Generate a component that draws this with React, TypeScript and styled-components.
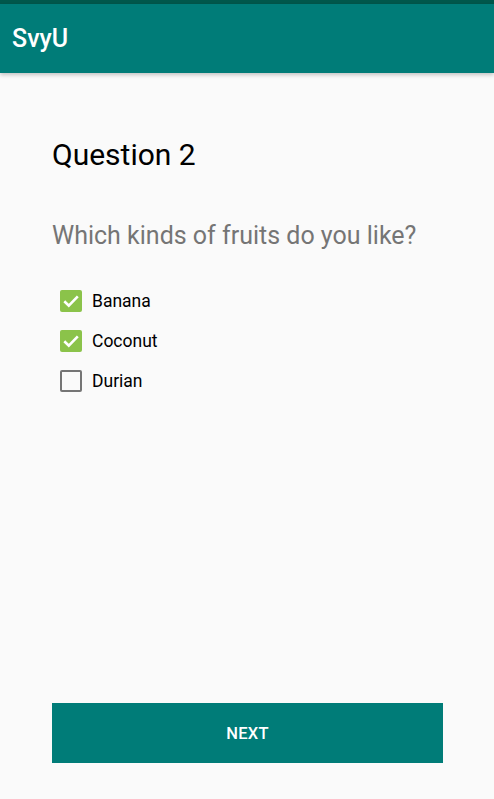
import styled, { createGlobalStyle } from "styled-components";

const GlobalStyle = createGlobalStyle`
  html, body {
    margin: 0;
    padding: 0;
    background: #fafafa;
    font-family: Roboto, "Noto Sans", sans-serif;
  }
  #root {
    min-height: 100vh;
  }
`;

const Screen = styled.div`
  display: flex;
  flex-direction: column;
  height: 100vh;
  background: #fafafa;
`;

const StatusBar = styled.div`
  height: 4px;
  background: #00574b;
`;

const AppBar = styled.header`
  height: 69px;
  display: flex;
  align-items: center;
  padding: 0 12px;
  background: #007c78;
  box-shadow: 0 2px 4px rgba(0, 0, 0, 0.22);
  position: relative;
  z-index: 1;
`;

const AppTitle = styled.h1`
  margin: 0;
  color: #ffffff;
  font-size: 25px;
  font-weight: 500;
`;

const Content = styled.main`
  flex: 1;
  display: flex;
  flex-direction: column;
  padding: 64px 51px 36px 52px;
`;

const Heading = styled.h2`
  margin: 0;
  font-size: 30px;
  font-weight: 400;
  color: #000000;
  line-height: 36px;
`;

const Prompt = styled.p`
  margin: 48px 0 39px;
  font-size: 25px;
  color: #757575;
  line-height: 30px;
`;

const OptionList = styled.div`
  display: flex;
  flex-direction: column;
  gap: 18px;
  padding-left: 8px;
`;

const Option = styled.label`
  display: flex;
  align-items: center;
  gap: 10px;
  font-size: 17.5px;
  color: #000000;
  height: 22px;
`;

const Box = styled.span<{ $checked: boolean }>`
  box-sizing: border-box;
  width: 22px;
  height: 22px;
  border-radius: 2px;
  display: flex;
  align-items: center;
  justify-content: center;
  background: ${({ $checked }) => ($checked ? "#8bc34a" : "transparent")};
  border: ${({ $checked }) => ($checked ? "none" : "2.5px solid #757575")};
`;

const Spacer = styled.div`
  flex: 1;
`;

const NextButton = styled.button`
  height: 60px;
  border: none;
  background: #007c78;
  color: #ffffff;
  font-family: Roboto, "Noto Sans", sans-serif;
  font-size: 16.5px;
  font-weight: 500;
  letter-spacing: 0.3px;
  text-transform: uppercase;
`;

const options = [
  { label: "Banana", checked: true },
  { label: "Coconut", checked: true },
  { label: "Durian", checked: false },
];

function Check() {
  return (
    <svg width="22" height="22" viewBox="0 0 22 22">
      <path
        d="M4.3 11.2 L8.8 15.6 L17.8 6.4"
        fill="none"
        stroke="#ffffff"
        strokeWidth="2.6"
      />
    </svg>
  );
}

function App() {
  return (
    <Screen>
      <GlobalStyle />
      <StatusBar />
      <AppBar>
        <AppTitle>SvyU</AppTitle>
      </AppBar>
      <Content>
        <Heading>Question 2</Heading>
        <Prompt>Which kinds of fruits do you like?</Prompt>
        <OptionList>
          {options.map((o) => (
            <Option key={o.label}>
              <Box $checked={o.checked}>{o.checked && <Check />}</Box>
              {o.label}
            </Option>
          ))}
        </OptionList>
        <Spacer />
        <NextButton>Next</NextButton>
      </Content>
    </Screen>
  );
}

export default App;
